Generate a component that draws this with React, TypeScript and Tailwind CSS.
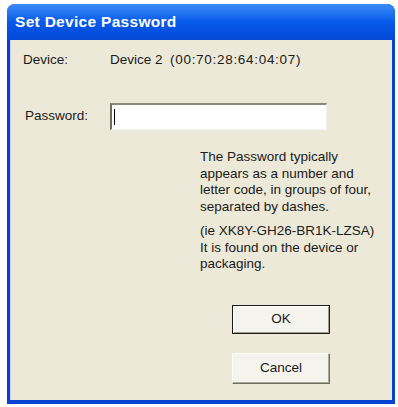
export default function App() {
  return (
    <div className="w-[398px] h-[407px] bg-white pl-[7px] pt-[4px]" style={{ fontFamily: '"Liberation Sans", Arial, sans-serif' }}>
      <div className="w-[388px] h-[400px] flex flex-col rounded-t-[8px] bg-[#0842d2] overflow-hidden">
        {/* title bar */}
        <div className="h-[36px] flex items-center pl-[8px] bg-gradient-to-b from-[#3b8cf6] via-[#0659ea] to-[#0548d6]">
          <span className="text-white font-bold text-[15.5px] tracking-[0.3px]">Set Device Password</span>
        </div>
        {/* body */}
        <div className="flex-1 mx-[3px] mb-[4px] bg-[#ece9d8] border-l border-[#c8d4f0] text-[13.5px] text-[#1a1a1a]">
          <div className="flex pt-[12px] pl-[12px] leading-[16px]">
            <span className="w-[87px]">Device:</span>
            <span className="whitespace-pre">Device 2  <span className="tracking-[0.7px]">(00:70:28:64:04:07)</span></span>
          </div>
          <div className="flex items-center mt-[35px] pl-[14px]">
            <span className="w-[85px]">Password:</span>
            <div className="w-[217px] h-[27px] bg-white border-t-2 border-l-2 border-t-[#8a8878] border-l-[#6f6d60] border-r border-b border-r-[#f4f2ea] border-b-[#f4f2ea] flex items-center pl-[2px]">
              <div className="w-px h-[16px] bg-black" />
            </div>
          </div>
          <div className="pl-[189px] mt-[19px] leading-[16.5px]">
            <p>The Password typically<br />appears as a number and<br />letter code, in groups of four,<br />separated by dashes.</p>
            <p className="mt-[8px]">(ie XK8Y-GH26-BR1K-LZSA)<br />It is found on the device or<br />packaging.</p>
          </div>
          <div className="pl-[221px] mt-[32px] flex flex-col gap-[19px]">
            <button className="w-[98px] h-[29px] border border-[#1b1b1b] bg-[#f4f3ee] shadow-[inset_1px_1px_0_#fff,inset_-1px_-1px_0_#a29e8c] text-[13.5px] text-[#1a1a1a]">OK</button>
            <button className="w-[98px] h-[31px] bg-[#f4f3ee] border border-t-[#fbfbf8] border-l-[#fbfbf8] border-r-[#716f64] border-b-[#716f64] shadow-[inset_-1px_-1px_0_#aca899] text-[13.5px] text-[#1a1a1a]">Cancel</button>
          </div>
        </div>
      </div>
    </div>
  );
}
